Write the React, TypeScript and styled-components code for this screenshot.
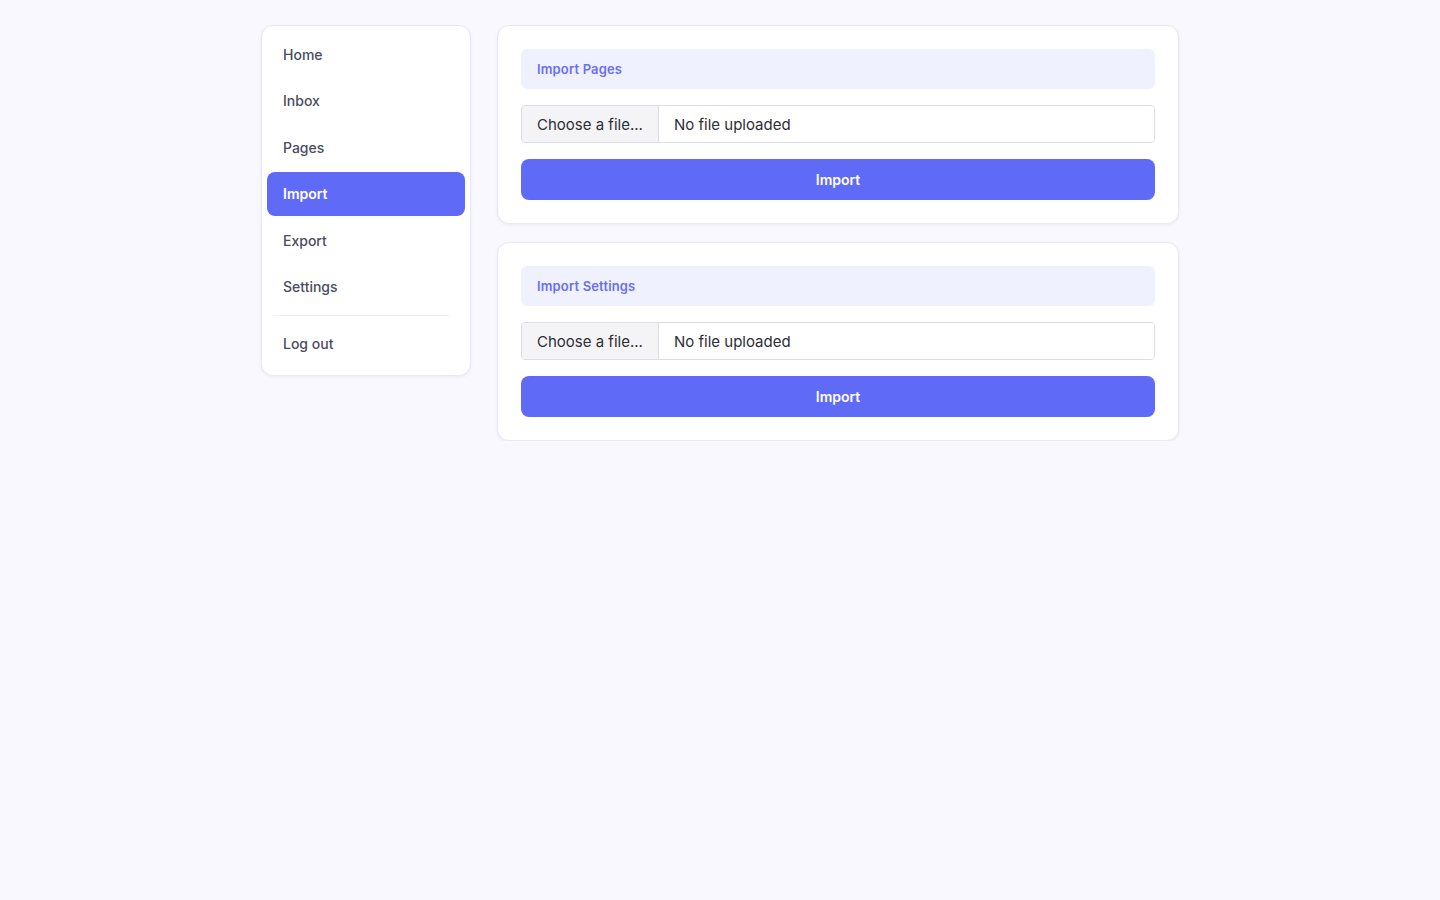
import React from 'react'
import styled, { createGlobalStyle } from 'styled-components'

const GlobalStyle = createGlobalStyle`
  html, body {
    margin: 0;
    padding: 0;
    background: #f8f8fe;
    font-family: Inter, "Noto Sans", "Liberation Sans", sans-serif;
  }
  * { box-sizing: border-box; }
`

const Layout = styled.div`
  width: 918px;
  margin: 0 auto;
  padding-top: 25px;
  display: flex;
  align-items: flex-start;
  gap: 26px;
`

const Sidebar = styled.nav`
  width: 210px;
  flex-shrink: 0;
  background: #fff;
  border: 1px solid #e9e9f2;
  border-radius: 12px;
  box-shadow: 0 1px 3px rgba(60, 60, 110, 0.08);
  padding: 6px 5px 10px;
  display: flex;
  flex-direction: column;
  gap: 2.6px;
`

const NavItem = styled.a<{ $active?: boolean }>`
  display: flex;
  align-items: center;
  height: 44px;
  padding: 0 16px;
  border-radius: 8px;
  font-size: 14px;
  font-weight: ${p => (p.$active ? 600 : 500)};
  color: ${p => (p.$active ? '#fff' : '#4a4b60')};
  background: ${p => (p.$active ? '#5f6af6' : 'transparent')};
  text-decoration: none;
  cursor: pointer;
`

const Divider = styled.hr`
  border: none;
  border-top: 1px solid #efeff4;
  margin: 3px 16px 3px 6px;
`

const Main = styled.div`
  flex: 1;
  display: flex;
  flex-direction: column;
  gap: 18px;
`

const Card = styled.section`
  background: #fff;
  border: 1px solid #e9e9f2;
  border-radius: 12px;
  box-shadow: 0 1px 3px rgba(60, 60, 110, 0.08);
  padding: 23px;
  display: flex;
  flex-direction: column;
  gap: 16px;
`

const CardHeader = styled.div`
  height: 40px;
  display: flex;
  align-items: center;
  padding: 0 16px;
  background: #eff1fe;
  border-radius: 6px;
  font-size: 13px;
  font-weight: 600;
  letter-spacing: 0.15px;
  color: #6a6ff0;
`

const FileRow = styled.label`
  display: flex;
  height: 38px;
  border: 1px solid #dcdce2;
  border-radius: 4px;
  overflow: hidden;
  font-size: 15px;
  color: #2e2e33;
  cursor: pointer;
`

const FileButton = styled.span`
  display: flex;
  align-items: center;
  padding: 0 15px;
  width: 137px;
  background: #f4f4f6;
  border-right: 1px solid #dcdce2;
`

const FileName = styled.span`
  display: flex;
  align-items: center;
  padding: 0 15px;
  flex: 1;
  background: #fff;
`

const HiddenInput = styled.input`
  display: none;
`

const ImportButton = styled.button`
  height: 41px;
  border: none;
  border-radius: 8px;
  background: #5f6af6;
  color: #fff;
  font-family: inherit;
  font-size: 14px;
  font-weight: 600;
  cursor: pointer;
`

const navItems = ['Home', 'Inbox', 'Pages', 'Import', 'Export', 'Settings']

const ImportCard = ({ title }: { title: string }) => (
  <Card>
    <CardHeader>{title}</CardHeader>
    <FileRow>
      <HiddenInput type="file" />
      <FileButton>Choose a file...</FileButton>
      <FileName>No file uploaded</FileName>
    </FileRow>
    <ImportButton>Import</ImportButton>
  </Card>
)

export default function App() {
  return (
    <>
      <GlobalStyle />
      <Layout>
        <Sidebar>
          {navItems.map(item => (
            <NavItem key={item} $active={item === 'Import'}>{item}</NavItem>
          ))}
          <Divider />
          <NavItem>Log out</NavItem>
        </Sidebar>
        <Main>
          <ImportCard title="Import Pages" />
          <ImportCard title="Import Settings" />
        </Main>
      </Layout>
    </>
  )
}
